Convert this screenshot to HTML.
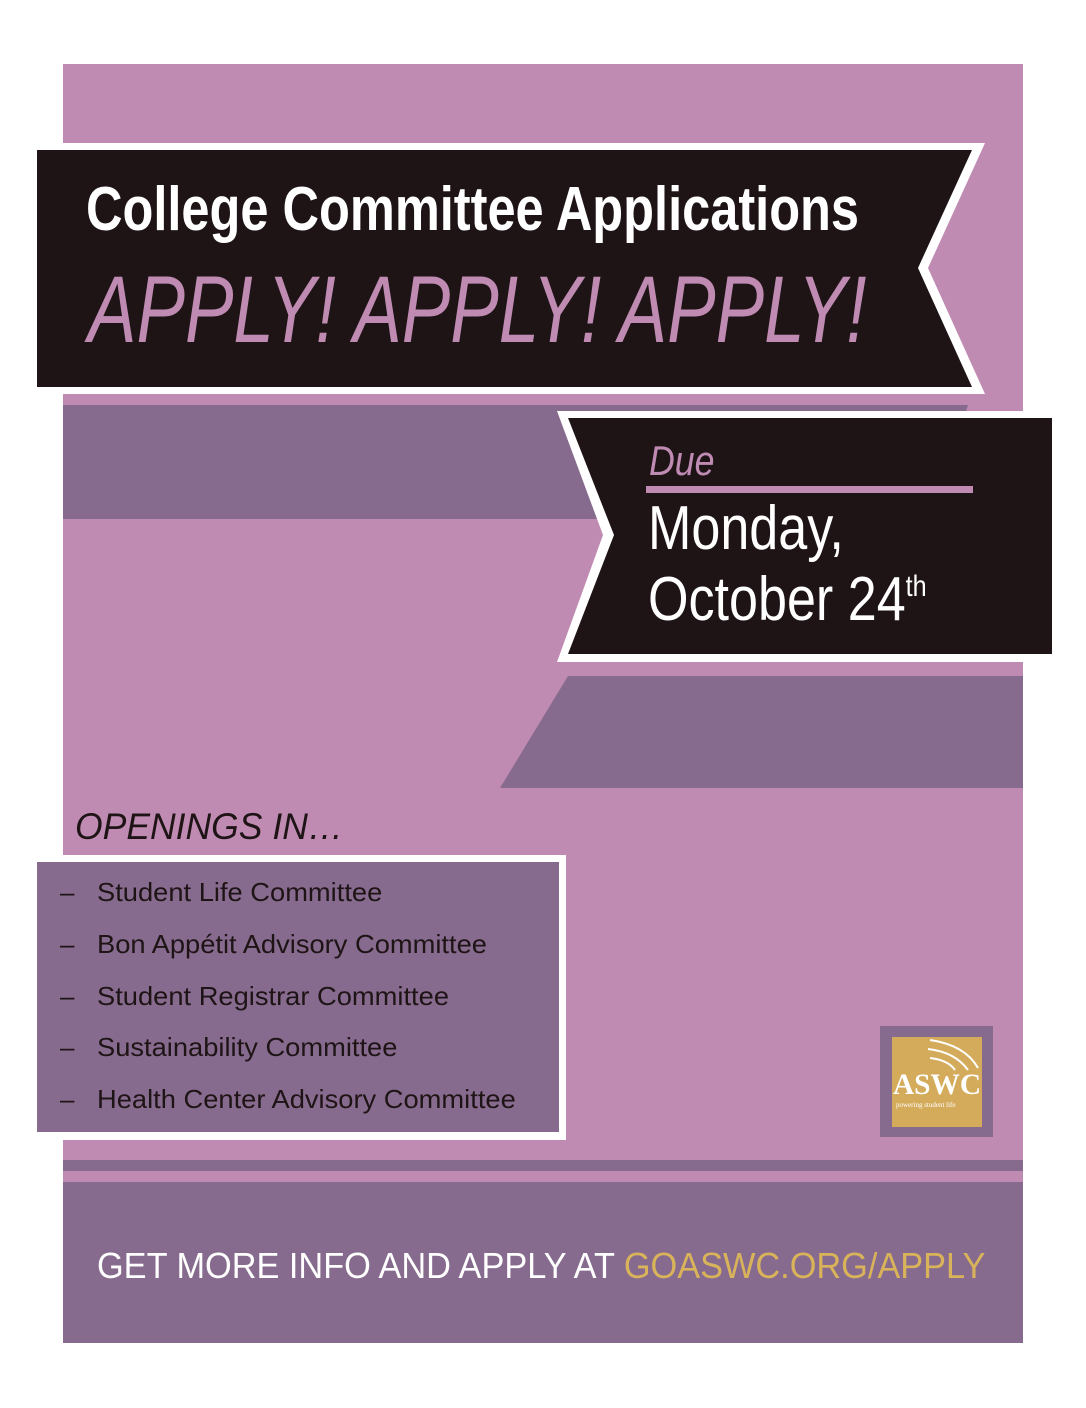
<!DOCTYPE html>
<html><head><meta charset="utf-8"><style>
body{margin:0;width:1086px;height:1408px;background:#fff;position:relative;overflow:hidden;font-family:"Liberation Sans",sans-serif}
.a{position:absolute;white-space:nowrap}
.s{transform-origin:left top;display:inline-block}
</style></head><body>
<div class="a" style="left:63px;top:64px;width:960px;height:1279px;background:#c08bb2"></div>
<svg class="a" style="left:0;top:0" width="1086" height="1408">
<polygon points="63,405 968,405 930,519 63,519" fill="#876b8e"/>
<polygon points="30,143 985,143 928,268 985,394 30,394" fill="#fff"/>
<polygon points="37,150 972,150 918,268 972,387 37,387" fill="#1e1416"/>
<polygon points="557,411 1052,411 1052,662 557,662 603,535" fill="#fff"/>
<polygon points="568,418 1052,418 1052,654 568,654 614,535" fill="#1e1416"/>
<polygon points="568,676 1023,676 1023,788 500,788" fill="#876b8e"/>
<rect x="646" y="486" width="327" height="7" fill="#c08bb2"/>
<rect x="31" y="855" width="535" height="285" fill="#fff"/>
<rect x="37" y="862" width="522" height="270" fill="#876b8e"/>
<rect x="63" y="1160" width="960" height="11" fill="#876b8e"/>
<rect x="63" y="1182" width="960" height="161" fill="#876b8e"/>
<rect x="880" y="1026" width="113" height="111" fill="#876b8e"/>
<rect x="892" y="1037" width="90" height="90" fill="#d4ab5a"/>
<path d="M930 1040 Q965 1045 978 1068 M928 1049 Q955 1052 968 1070 M930 1058 Q948 1060 955 1070" stroke="#fff" stroke-width="2" fill="none"/>
<text x="893" y="1094" font-family="Liberation Serif" font-weight="bold" font-size="30" fill="#fff" textLength="88" lengthAdjust="spacingAndGlyphs">ASWC</text>
<text x="896" y="1107" font-family="Liberation Serif" font-size="7" fill="#fff">powering student life</text>
</svg>
<div class="a" style="left:86px;top:174px;color:#fff;font-weight:bold;font-size:62px"><span class="s" style="transform:scaleX(0.815)">College Committee Applications</span></div>
<div class="a" style="left:88px;top:256px;color:#c08bb2;font-style:italic;font-size:95px"><span class="s" style="transform:scaleX(0.765)">APPLY! APPLY! APPLY!</span></div>
<div class="a" style="left:649px;top:437px;color:#c08bb2;font-style:italic;font-size:42px"><span class="s" style="transform:scaleX(0.85)">Due</span></div>
<div class="a" style="left:648px;top:500px;color:#fff;font-size:62px;line-height:58px"><span class="s" style="transform:scaleX(0.84)">Monday,<br>October 24<sup style="font-size:30px;vertical-align:24px">th</sup></span></div>
<div class="a" style="left:75px;top:806px;color:#1e1416;font-style:italic;font-size:37px"><span class="s" style="transform:scaleX(0.96)">OPENINGS IN…</span></div>
<div class="a" style="left:60px;top:867px;color:#1e1416;font-size:26px;line-height:51.8px">–<br>–<br>–<br>–<br>–</div>
<div class="a" style="left:97px;top:867px;color:#1e1416;font-size:26px;line-height:51.8px"><span class="s" style="transform:scaleX(1.05)">Student Life Committee<br>Bon Appétit Advisory Committee<br>Student Registrar Committee<br>Sustainability Committee<br>Health Center Advisory Committee</span></div>
<div class="a" style="left:97px;top:1245px;color:#fff;font-size:36px"><span class="s" style="transform:scaleX(0.953)">GET MORE INFO AND APPLY AT <span style="color:#d9b35a">GOASWC.ORG/APPLY</span></span></div>
</body></html>
